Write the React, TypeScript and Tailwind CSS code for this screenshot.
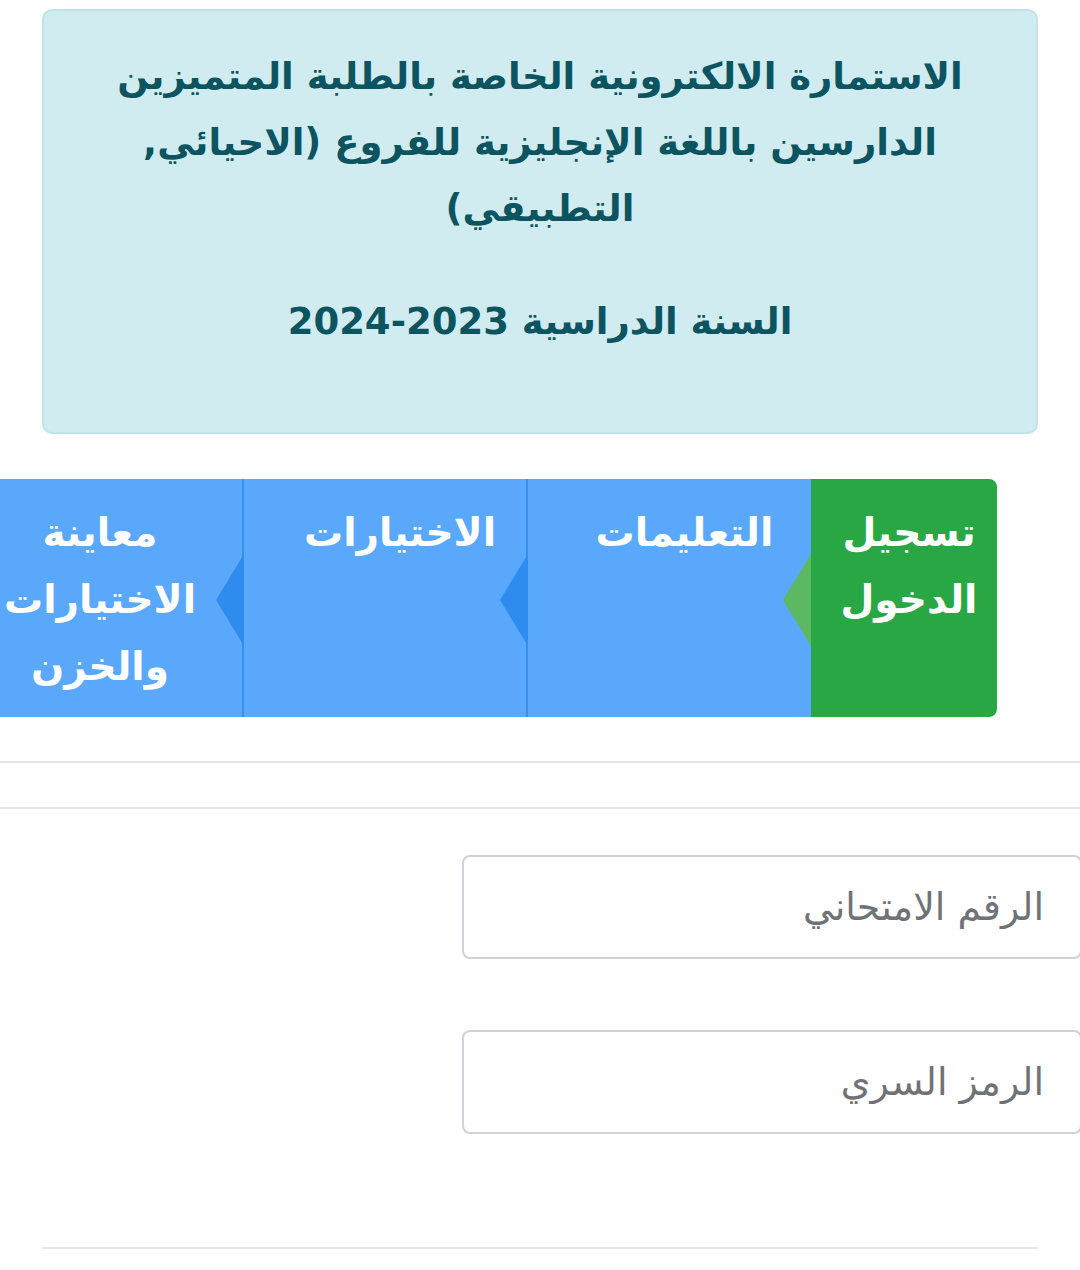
import React from "react";

const tabs = [
  { label: ["تسجيل", "الدخول"], width: "w-[186px]", active: true },
  { label: ["التعليمات"], width: "w-[285px]", active: false },
  { label: ["الاختيارات"], width: "w-[284px]", active: false },
  { label: ["معاينة", "الاختيارات", "والخزن"], width: "w-[316px]", active: false },
];

function Tab({ label, width, active }: { label: string[]; width: string; active: boolean }) {
  return (
    <div
      className={`relative shrink-0 ${width} h-[238px] pt-[20px] text-center font-bold text-white text-[39px] leading-[67px] ${
        active
          ? "bg-[#29a745] rounded-r-[8px] pl-[10px]"
          : "bg-[#5aa8fb] border-l-2 border-[#3a8ee8] pl-[30px]"
      }`}
    >
      {label.map((l) => (
        <div key={l}>{l}</div>
      ))}
      <span
        className={`absolute z-10 top-[75px] left-[-28px] h-0 w-0 border-y-[46px] border-y-transparent border-r-[28px] ${
          active ? "border-r-[#5db862]" : "border-r-[#2e8cee]"
        }`}
      />
    </div>
  );
}

function Field({ placeholder }: { placeholder: string }) {
  return (
    <div className="flex justify-start">
      <input
        type="text"
        placeholder={placeholder}
        className="w-[620px] h-[104px] mr-[-2px] rounded-[8px] border-2 border-[#cfd3d7] bg-white pr-[36px] text-[38px] text-[#495057] placeholder:text-[#6f7378] outline-none"
      />
    </div>
  );
}

export default function App() {
  return (
    <div
      dir="rtl"
      className="w-[1080px] h-[1270px] overflow-hidden bg-white"
      style={{ fontFamily: '"DejaVu Sans", "Noto Sans", sans-serif' }}
    >
      <div className="mx-[42px] mt-[9px] h-[425px] rounded-[10px] border-2 border-[#bfe5eb] bg-[#d1ecf1] pt-[33px] text-center font-bold text-[#0c5460] text-[37px] leading-[66px]">
        <p>
          الاستمارة الالكترونية الخاصة بالطلبة المتميزين
          <br />
          الدارسين باللغة الإنجليزية للفروع (الاحيائي,
          <br />
          التطبيقي)
        </p>
        <p className="mt-[47px]">السنة الدراسية 2023-2024</p>
      </div>

      <div className="mt-[45px] flex mr-[83px]">
        {tabs.map((t) => (
          <Tab key={t.label.join(" ")} {...t} />
        ))}
      </div>

      <div className="mt-[44px] border-t-2 border-[#e3e5e8]" />
      <div className="mt-[44px] border-t-2 border-[#e3e5e8]" />

      <div className="mt-[46px]">
        <Field placeholder="الرقم الامتحاني" />
      </div>
      <div className="mt-[71px]">
        <Field placeholder="الرمز السري" />
      </div>

      <div className="mx-[42px] mt-[113px] border-t-2 border-[#e3e5e8]" />
    </div>
  );
}
